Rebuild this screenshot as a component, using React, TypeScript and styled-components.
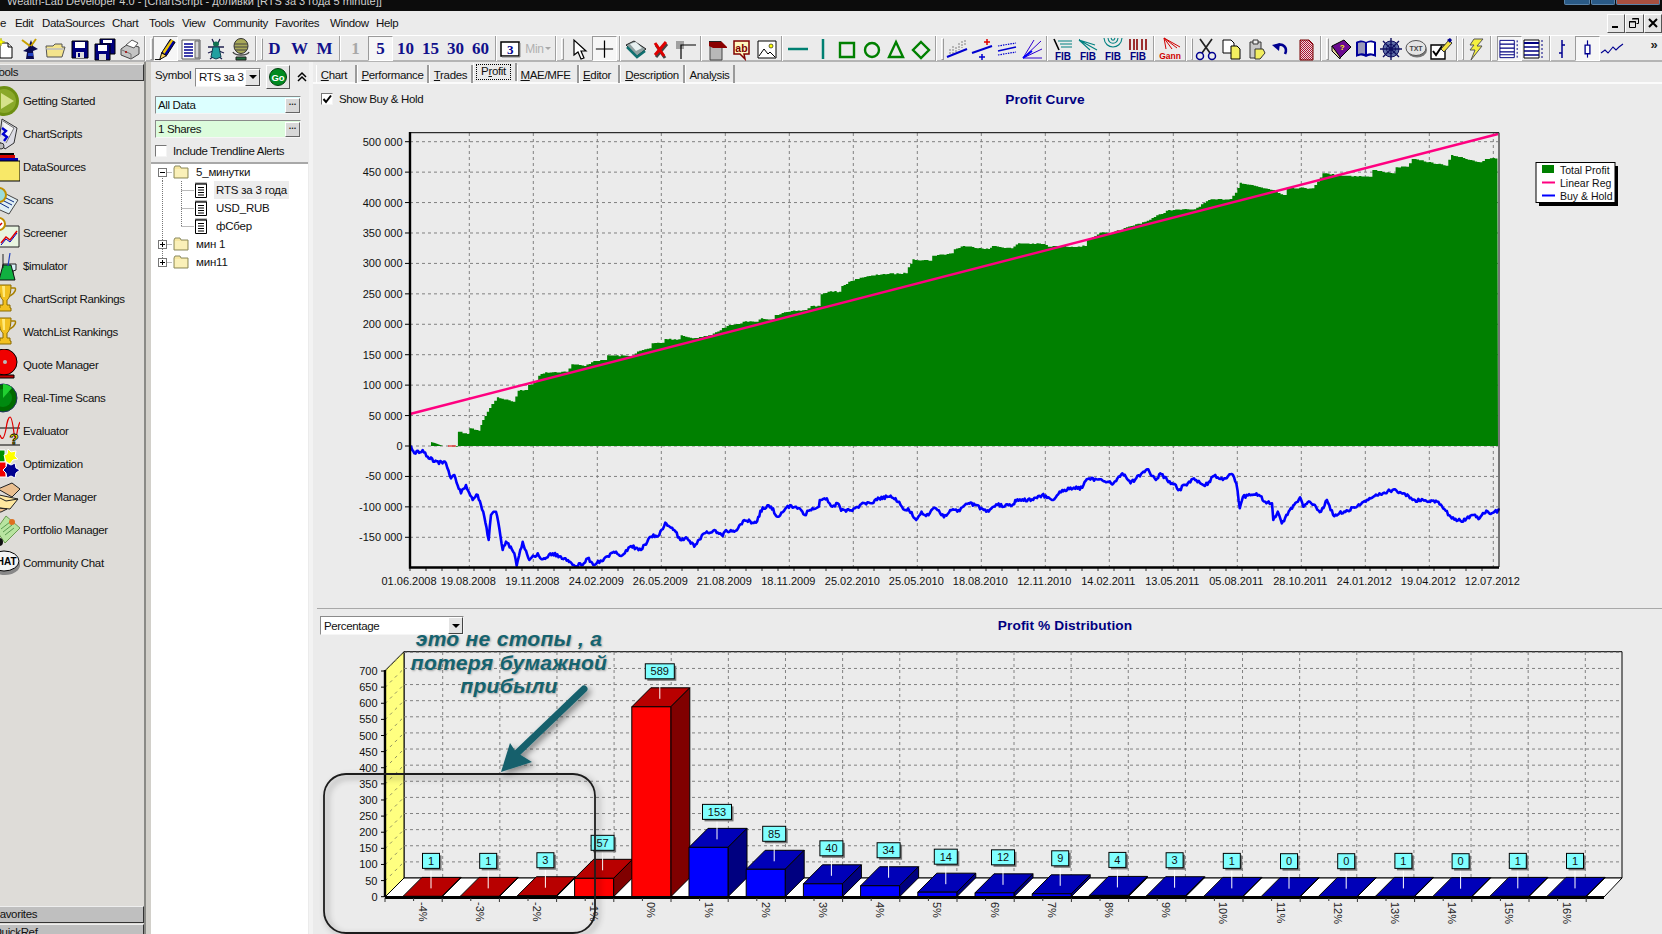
import React from 'react';
import styled, { createGlobalStyle } from 'styled-components';

const UI = `"Liberation Sans", Arial, sans-serif`;

const Global = createGlobalStyle`
  html, body { margin: 0; padding: 0; background: #ebebeb; }
  * { box-sizing: border-box; }
`;

const Page = styled.div`
  width: 1662px; height: 934px; overflow: hidden; display: flex; flex-direction: column;
  background: #ebebeb; font-family: ${UI}; font-size: 11.5px; letter-spacing: -0.35px; color: #111;
`;
const TitleBar = styled.div`
  height: 11px; flex: none; background: #0c0c0c; display: flex; overflow: hidden; padding-left: 7px;
`;
const TitleText = styled.div`
  font-size: 11px; letter-spacing: 0; color: #cfcfcf; line-height: 14px; margin-top: -6px; white-space: nowrap;
`;
const WinButtons = styled.div` margin-left: auto; display: flex; gap: 1px; height: 5px; margin-right: 2px; `;
const WinButton = styled.div<{ $w: number; $c: string }>`
  width: ${p => p.$w}px; height: 5px; background: ${p => p.$c}; border: 1px solid #5a83a8; border-top: 0; border-radius: 0 0 2px 2px;
`;
const MenuBar = styled.div`
  height: 24px; flex: none; display: flex; align-items: center; padding-left: 0; position: relative; background: #ebebeb;
`;
const MenuItem = styled.span<{ $w: number }>` width: ${p => p.$w}px; flex: none; white-space: nowrap; `;
const MdiButtons = styled.div` margin-left: auto; display: flex; `;
const MdiButton = styled.div`
  width: 18.5px; height: 19px; background: #e4e4e4; border: 1px solid; border-color: #fff #555 #555 #fff;
  display: flex; align-items: center; justify-content: center;
`;
const Toolbar = styled.div`
  height: 27px; flex: none; display: flex; align-items: center; margin-left: -8px; width: 1670px;
  background: #ebebeb; border-top: 1px solid #fff; border-bottom: 2px solid #b4b4b4; padding-top: 1px;
`;
const ToolBtn = styled.div<{ $w?: number; $on?: boolean }>`
  width: ${p => p.$w ?? 25}px; height: 25px; flex: none; display: flex; align-items: center; justify-content: center;
  ${p => p.$on ? 'background: #f6f6f6; border: 1px solid; border-color: #9a9a9a #fff #fff #9a9a9a;' : ''}
`;
const ToolLetter = styled.span<{ $gray?: boolean }>`
  font-family: "Liberation Serif", serif; font-weight: 700; font-size: 17px; letter-spacing: 0;
  color: ${p => p.$gray ? '#a8a8a8' : '#10108a'};
`;
const MinLabel = styled.span` color: #b0b0b0; font-size: 12px; display: flex; align-items: center; gap: 1px; `;
const Gap = styled.div<{ $w: number }>`
  width: ${p => p.$w}px; height: 25px; flex: none; display: flex; align-items: center; gap: 4px; padding-left: 2px;
`;
const SepLine = styled.div` width: 2px; height: 25px; border-left: 1px solid #a0a0a0; border-right: 1px solid #fff; `;
const Grip = styled.div` width: 3px; height: 22px; border: 1px solid; border-color: #fff #9a9a9a #9a9a9a #fff; `;
const Chevrons = styled.span` margin-left: 26px; font-weight: 700; font-size: 13px; line-height: 14px; color: #222; margin-top: -8px; flex: none; `;

const Body = styled.div` flex: 1; display: flex; min-height: 0; `;
const Sidebar = styled.div`
  width: 146px; flex: none; background: #dedcd8; border-right: 2px solid #8a8a86; display: flex; flex-direction: column;
  padding-top: 2px; overflow: hidden;
`;
const SideHead = styled.div<{ $last?: boolean }>`
  height: 17px; flex: none; background: #bfbfbf; border: 1px solid; border-color: #eee #333 #333 #eee;
  margin-bottom: ${p => p.$last ? -7 : 1}px; line-height: 15px; margin-left: -12px; padding-left: 4px; white-space: nowrap; overflow: hidden;
`;
const SideList = styled.div` flex: 1; padding-top: 2px; `;
const SideItem = styled.div`
  height: 33px; display: flex; align-items: center; white-space: nowrap; overflow: hidden;
`;
const SideIcon = styled.svg` width: 32px; height: 32px; margin-left: -12px; margin-right: 3px; flex: none; `;
const Splitter = styled.div` width: 5px; flex: none; background: #d2d0ca; `;
const Mid = styled.div` width: 162px; flex: none; display: flex; flex-direction: column; border-right: 4px solid #f3f3f3; `;
const SymbolRow = styled.div` height: 28px; flex: none; display: flex; align-items: center; padding: 0 0 0 4px; margin-top: 1px; `;
const SymbolLabel = styled.span` width: 40px; flex: none; margin-top: -5px; `;
const Combo = styled.div<{ $w: number }>`
  width: ${p => p.$w}px; height: 19px; background: #fff; border: 1px solid; border-color: #8a8a8a #f6f6f6 #f6f6f6 #8a8a8a;
  display: flex; align-items: center; padding-left: 3px; justify-content: space-between; flex: none; white-space: nowrap; overflow: hidden;
  font-size: 11.5px;
`;
const ComboArrow = styled.div`
  width: 15px; height: 17px; background: #e4e4e4; border: 1px solid; border-color: #fff #444 #444 #fff; flex: none;
  display: flex; align-items: center; justify-content: center;
  &::after { content: ''; border-left: 4px solid transparent; border-right: 4px solid transparent; border-top: 4px solid #000; }
`;
const GoButton = styled.div`
  width: 24px; height: 24px; margin-left: 5px; background: #e4e4e4; border: 1px solid; border-color: #fff #555 #555 #fff;
  display: flex; align-items: center; justify-content: center; flex: none;
`;
const FieldBox = styled.div<{ $bg: string; $top: number }>`
  width: 146px; height: 18px; margin: ${p => p.$top}px 0 0 4px; flex: none; background: ${p => p.$bg};
  border: 1px solid; border-color: #8a8a8a #f6f6f6 #f6f6f6 #8a8a8a; display: flex; align-items: center; justify-content: space-between; padding-left: 2px;
`;
const Ellipsis = styled.div`
  width: 15px; height: 15px; background: #d8d8d8; border: 1px solid; border-color: #fff #666 #666 #fff;
  text-align: center; font-weight: 700; line-height: 6px; font-size: 9px; letter-spacing: 0; color: #222;
`;
const CheckRow = styled.div` height: 13px; display: flex; align-items: center; gap: 6px; margin: 6px 0 0 4px; flex: none; `;
const Check = styled.div<{ $on?: boolean }>`
  width: 12px; height: 12px; background: #fff; border: 1px solid; border-color: #777 #f4f4f4 #f4f4f4 #777; flex: none;
  display: flex; align-items: center; justify-content: center;
`;
const Tree = styled.div`
  flex: 1; margin-top: 5px; background: #fff; border-top: 2px solid #a8a8a8; width: 157px; letter-spacing: -0.2px;
  & > :first-child { margin-top: -1px; }
`;
const TreeRow = styled.div` height: 18px; display: flex; align-items: center; white-space: nowrap; `;
const TreeName = styled.span<{ $sel?: boolean; $doc?: boolean }>`
  margin-left: ${p => p.$doc ? 7 : 5}px; padding: 0 2px; height: 18px; line-height: 18px;
  ${p => p.$sel ? 'background: #ececec;' : ''}
`;

const Main = styled.div` flex: 1; min-width: 0; display: flex; flex-direction: column; `;
const TabBar = styled.div`
  height: 22px; flex: none; display: flex; padding: 2px 0 0 3px; border-bottom: 2px solid #fbfbfb;
`;
const Tab = styled.div<{ $w: number; $on?: boolean; $shift?: number }>`
  width: ${p => p.$w}px; flex: none; height: 18px; text-align: center; line-height: 20px; margin-top: ${p => p.$on ? -1 : 1}px;
  padding-right: ${p => p.$shift ?? 0}px;
  border-right: 2px solid #9a9a9a; border-left: 1px solid #fff; white-space: nowrap; font-size: 11.5px;
  & > span { ${p => p.$on ? 'display: block; margin: 1px 0 0 2px; height: 16px; line-height: 15px; outline: 1px dotted #000; outline-offset: -1px;' : ''} }
`;
const UpperPanel = styled.div` height: 524px; flex: none; display: flex; flex-direction: column; `;
const PanelHead = styled.div` height: 30px; flex: none; display: flex; align-items: center; padding-left: 8px; `;
const ShowCheck = styled.div` width: 624px; flex: none; display: flex; align-items: center; gap: 6px; `;
const ChartTitle = styled.div`
  width: 200px; flex: none; text-align: center; color: #000080; font-weight: 700; font-size: 13.7px; letter-spacing: 0.1px;
`;
const ChartSvg = styled.svg` display: block; flex: none; `;
const Divider = styled.div` height: 1px; flex: none; background: #a8a8a8; margin-left: 4px; `;
const LowerPanel = styled.div` flex: 1; position: relative; display: flex; flex-direction: column; min-height: 0; `;
const LowerHead = styled.div` height: 31px; flex: none; display: flex; align-items: center; padding: 2px 0 0 7px; `;
const LowerTitle = styled(ChartTitle)` margin-left: 501px; `;
const Annotation = styled.div`
  position: absolute; left: 86px; top: 18px; width: 220px; text-align: center;
  font: italic 700 21px/23.5px ${UI}; letter-spacing: 0.3px; color: #15636f;
  text-shadow: 1px 1px 2px rgba(0,0,0,.3); white-space: nowrap;
`;

/* ---------- toolbar icons ---------- */
const Ico = styled.svg` width: 24px; height: 24px; display: block; `;
const Fib = ({ children, c = '#000080' }: { children: React.ReactNode; c?: string }) => (
  <Ico viewBox="0 0 24 24">{children}<text x="12" y="22.500" textAnchor="middle" fontFamily={UI} fontWeight={700} fontSize="10" fill={c} letterSpacing="0">FIB</text></Ico>
);
const icons: Record<string, React.ReactNode> = {
  newDoc: <Ico viewBox="0 0 24 24"><path d="M7 6h8l4 4v11H7z" fill="#fff" stroke="#000" /><path d="M15 6v4h4" fill="#ddd" stroke="#000" /><path d="M8 1l1 3 3 1-3 1-1 3-1-3-3-1 3-1z" fill="#ff0" stroke="#aa0" strokeWidth=".5" /></Ico>,
  wizard: <Ico viewBox="0 0 24 24"><path d="M13 3l-3 8-5 3 4 1-1 7h8l-1-8 5-2-5-3z" fill="#0a0a50" /><path d="M4 3l8 6M18 2l-5 7" stroke="#c8a000" strokeWidth="2" /><path d="M10 16h5v3h-5z" fill="#2040c0" /></Ico>,
  open: <Ico viewBox="0 0 24 24"><path d="M3 9h7l2-2h7v3h3l-3 10H4z" fill="#f4e48c" stroke="#555" /><path d="M3 11h18v2H4z" fill="#c9c6b5" /></Ico>,
  save: <Ico viewBox="0 0 24 24"><path d="M4 4h16v17H4z" fill="#00007c" stroke="#000" /><path d="M7 5h10v6H7z" fill="#fff" /><path d="M8 15h8v6H8z" fill="#ddd" /><path d="M10 16h2v4h-2z" fill="#00007c" /></Ico>,
  saveAll: <Ico viewBox="0 0 24 24"><path d="M7 2h15v15H7z" fill="#00007c" stroke="#000" /><path d="M2 7h15v16H2z" fill="#00007c" stroke="#000" /><path d="M5 8h9v6H5z" fill="#fff" /><path d="M6 17h7v6H6z" fill="#ddd" /><path d="M10 3h9v3h-9z" fill="#fff" /></Ico>,
  print: <Ico viewBox="0 0 24 24"><path d="M3 12l7-5 11 3v7l-8 5-10-4z" fill="#c4c4c4" stroke="#444" /><path d="M8 8l6-5 6 3-4 5z" fill="#fff" stroke="#555" /><path d="M4 13l9 4v5" fill="none" stroke="#777" /><circle cx="8" cy="15" r="1" fill="#a00" /></Ico>,
  pencil: <Ico viewBox="0 0 24 24"><path d="M8 16L17 2l5 3-9 14z" fill="#0000a0" stroke="#000" /><path d="M8 16l5 3-7 4z" fill="#f6d060" stroke="#000" /><path d="M9 15l9-13 2 1-9 14z" fill="#f2c800" /><path d="M1 23h6" stroke="#000" /></Ico>,
  list: <Ico viewBox="0 0 24 24"><path d="M3 3h18v19H3z" fill="#fff" stroke="#555" /><path d="M5 7h9M5 10h9M5 13h9M5 16h9M5 19h9" stroke="#000090" strokeWidth="1.3" /><path d="M16 4h4v17h-4z" fill="#d4d4d4" stroke="#666" /></Ico>,
  bug: <Ico viewBox="0 0 24 24"><path d="M8 2l2 4M16 2l-2 4M4 10h16M4 16l5-2M20 16l-5-2M6 22l4-3M18 22l-4-3" stroke="#202050" strokeWidth="1.3" /><ellipse cx="12" cy="7" rx="3" ry="2.5" fill="#107050" /><path d="M9 10h6l2 10-5 2-5-2z" fill="#20a0a0" stroke="#104050" /></Ico>,
  mic: <Ico viewBox="0 0 24 24"><ellipse cx="12" cy="9" rx="7" ry="7.5" fill="#a8a858" stroke="#333" /><path d="M5 7h14M5 10h14M6 13h12" stroke="#444" /><path d="M4 15c2 4 14 4 16 0" fill="none" stroke="#444" strokeWidth="1.5" /><path d="M7 20h10v3H7z" fill="#207040" stroke="#222" /></Ico>,
  d: <ToolLetter>D</ToolLetter>, w: <ToolLetter>W</ToolLetter>, m: <ToolLetter>M</ToolLetter>,
  n1: <ToolLetter $gray>1</ToolLetter>, n5: <ToolLetter>5</ToolLetter>, n10: <ToolLetter>10</ToolLetter>, n15: <ToolLetter>15</ToolLetter>, n30: <ToolLetter>30</ToolLetter>, n60: <ToolLetter>60</ToolLetter>,
  box3: <Ico viewBox="0 0 24 24"><path d="M2 5h18v14H2z" fill="#fff" stroke="#000" strokeWidth="1.5" /><path d="M21 6v14H3" fill="none" stroke="#888" /><text x="11" y="17" textAnchor="middle" fontFamily="Liberation Serif" fontWeight={700} fontSize="13" fill="#000090">3</text></Ico>,
  min: <MinLabel>Min<svg width="6" height="4"><path d="M0 0h6L3 3z" fill="#a8a8a8" /></svg></MinLabel>,
  cursor: <Ico viewBox="0 0 24 24"><path d="M7 3v15l4-3 3 7 3-1-3-7h5z" fill="#fff" stroke="#000" strokeWidth="1.2" /></Ico>,
  cross: <Ico viewBox="0 0 24 24"><path d="M12 3v18M3 12h18" stroke="#000" strokeWidth="1.3" /></Ico>,
  book: <Ico viewBox="0 0 24 24"><path d="M2 8l8-4 12 8-9 7z" fill="#90a0a0" stroke="#222" /><path d="M3 10l10 10 8-6" fill="none" stroke="#107070" strokeWidth="2.5" /><path d="M6 7l6-2 6 6-6 3z" fill="#e8f0f0" /></Ico>,
  redX: <Ico viewBox="0 0 24 24"><path d="M7 8l9 13M18 7L7 20" stroke="#444" strokeWidth="3" /><path d="M6 6l9 13M17 5L6 18" stroke="#e00000" strokeWidth="3" /></Ico>,
  corner: <Ico viewBox="0 0 24 24"><path d="M2 4h8v8H2z" fill="#a0a0a0" /><path d="M7 22V8h15" fill="none" stroke="#000" strokeWidth="1.2" /></Ico>,
  note: <Ico viewBox="0 0 24 24"><path d="M5 8h12v15H5z" fill="#b8b8b8" stroke="#444" /><path d="M4 4h12l6 6v1H8L4 9z" fill="#8a0000" /><path d="M4 4h12v1H4z" fill="#222" /></Ico>,
  ab: <Ico viewBox="0 0 24 24"><path d="M4 4h15v13h-5l1 5-5-5H4z" fill="#fff8c0" stroke="#800000" strokeWidth="1.5" /><text x="11.500" y="14.500" textAnchor="middle" fontFamily={UI} fontWeight={700} fontSize="10.500" fill="#800000" letterSpacing="0">ab</text></Ico>,
  picture: <Ico viewBox="0 0 24 24"><path d="M3 4h18v17H3z" fill="#fff" stroke="#000" /><circle cx="16" cy="9" r="2" fill="#ff0" stroke="#000" strokeWidth=".6" /><path d="M4 19l5-7 4 5 2-2 5 5" fill="none" stroke="#000" /></Ico>,
  hline: <Ico viewBox="0 0 24 24"><path d="M2 12h20" stroke="#008072" strokeWidth="2.5" /></Ico>,
  vline: <Ico viewBox="0 0 24 24"><path d="M12 2v20" stroke="#008072" strokeWidth="2.5" /></Ico>,
  square: <Ico viewBox="0 0 24 24"><path d="M5 6h14v14H5z" fill="none" stroke="#008000" strokeWidth="2.4" /></Ico>,
  circle: <Ico viewBox="0 0 24 24"><circle cx="12" cy="13" r="7" fill="none" stroke="#008000" strokeWidth="2.4" /></Ico>,
  triangle: <Ico viewBox="0 0 24 24"><path d="M12 5l7 15H5z" fill="none" stroke="#008000" strokeWidth="2.4" /></Ico>,
  diamond: <Ico viewBox="0 0 24 24"><path d="M12 5l8 8-8 8-8-8z" fill="none" stroke="#008000" strokeWidth="2.4" /></Ico>,
  trend: <Ico viewBox="0 0 24 24"><path d="M5 12v6M8 9v8M11 10v6M14 6v7M17 4v7M20 3v6" stroke="#a0a0a0" strokeWidth="1.4" strokeDasharray="2 1" /><path d="M2 20l20-8" stroke="#0000d0" strokeWidth="2" /></Ico>,
  crossTrend: <Ico viewBox="0 0 24 24"><path d="M2 16l20-7" stroke="#0000d0" strokeWidth="2" /><path d="M14 5h6M17 2v6" stroke="#e00000" strokeWidth="1.5" /><path d="M9 20h6M12 17v6" stroke="#0000d0" strokeWidth="1.5" /></Ico>,
  dotted: <Ico viewBox="0 0 24 24"><path d="M3 9l18-3M3 18l18-3" stroke="#0000d0" strokeWidth="1.2" strokeDasharray="1.5 1" /><path d="M3 14l18-4" stroke="#0000d0" strokeWidth="1.6" /></Ico>,
  fan: <Ico viewBox="0 0 24 24"><path d="M3 21L21 4M3 21L22 12M3 21h19M3 21L14 3" stroke="#3000d0" strokeWidth="1" fill="none" /><path d="M3 21l9-7" stroke="#0000ff" strokeWidth="1.8" /></Ico>,
  fib1: <Fib><path d="M3 2l5 11" stroke="#000" strokeWidth="1.6" /><path d="M7 4h14M9 7h12M10 10h11" stroke="#008080" strokeWidth="1.2" /></Fib>,
  fib2: <Fib><path d="M3 3l18 10M3 3l16 5M3 3l11 10" stroke="#008080" strokeWidth="1.1" fill="none" /></Fib>,
  fib3: <Fib><path d="M3 1c1 12 17 12 18 0M7 1c1 7 9 7 10 0M10 1c1 3 3 3 4 0" stroke="#008080" strokeWidth="1.1" fill="none" /></Fib>,
  fib4: <Fib><path d="M4 2v11M8 2v11M11 2v11M16 2v11M20 2v11" stroke="#8a0000" strokeWidth="1.6" /></Fib>,
  gann: <Ico viewBox="0 0 24 24"><path d="M6 1l16 9M6 1l13 10M6 1l8 11M6 1l2 11" stroke="#d00000" strokeWidth="1" fill="none" /><text x="12" y="22" textAnchor="middle" fontFamily={UI} fontWeight={700} fontSize="8.5" fill="#d00000" letterSpacing="0">Gann</text></Ico>,
  scissors: <Ico viewBox="0 0 24 24"><path d="M6 2l10 14M18 2L8 16" stroke="#222" strokeWidth="1.7" /><circle cx="6" cy="19" r="3.5" fill="none" stroke="#000090" strokeWidth="1.5" /><circle cx="18" cy="19" r="3.5" fill="none" stroke="#000090" strokeWidth="1.5" /></Ico>,
  copy: <Ico viewBox="0 0 24 24"><path d="M4 3h8l3 3v10H4z" fill="#fff" stroke="#000" /><path d="M12 9h6l3 3v10h-9z" fill="#f2ee60" stroke="#000" /></Ico>,
  paste: <Ico viewBox="0 0 24 24"><path d="M6 5h11v16H6z" fill="#c8c8c8" stroke="#333" /><path d="M9 3h5v4H9z" fill="#eee" stroke="#333" /><path d="M11 12h8l2 4-5 6h-5z" fill="#f2ee60" stroke="#333" /></Ico>,
  undo: <Ico viewBox="0 0 24 24"><path d="M7 9c7-4 12 2 9 8" fill="none" stroke="#000090" strokeWidth="2.6" /><path d="M3 8l8-2-1 8z" fill="#000090" /></Ico>,
  redPage: <Ico viewBox="0 0 24 24"><defs><pattern id="chk" width="2" height="2" patternUnits="userSpaceOnUse"><rect width="2" height="2" fill="#b01030" /><rect width="1" height="1" fill="#e8e0e0" /><rect x="1" y="1" width="1" height="1" fill="#e8e0e0" /></pattern></defs><path d="M6 3h9l4 4v16H6z" fill="url(#chk)" stroke="#700" /></Ico>,
  purpleBook: <Ico viewBox="0 0 24 24"><path d="M3 9L15 3l7 7-11 11z" fill="#6a0a90" stroke="#000" /><path d="M3 9v5l8 8v-2z" fill="#e8d8a0" stroke="#000" /><text x="13" y="13" fontFamily={UI} fontWeight={700} fontSize="8" fill="#ff0" textAnchor="middle">?</text></Ico>,
  blueBook: <Ico viewBox="0 0 24 24"><path d="M2 5c4-2 7-2 10 0 3-2 6-2 10 0v15c-4-2-7-2-10 0-3-2-6-2-10 0z" fill="#00009a" /><path d="M4 6c3-1 5-1 7 0v11c-2-1-4-1-7 0z" fill="#9a9ab8" /><path d="M13 6c2-1 5-1 7 0v11c-3-1-5-1-7 0z" fill="#fff" /></Ico>,
  web: <Ico viewBox="0 0 24 24"><circle cx="12" cy="12" r="8" fill="#6070a8" /><path d="M12 1v22M1 12h22M4 4l16 16M20 4L4 20" stroke="#101060" strokeWidth="1.4" /><circle cx="12" cy="12" r="4.5" fill="none" stroke="#101060" /><circle cx="12" cy="12" r="8" fill="none" stroke="#101060" /></Ico>,
  chat: <Ico viewBox="0 0 24 24"><ellipse cx="13" cy="13" rx="10" ry="7.5" fill="#777" /><ellipse cx="12" cy="11" rx="10" ry="7.5" fill="#e4e4e4" stroke="#555" /><text x="12" y="14" textAnchor="middle" fontFamily={UI} fontWeight={700} fontSize="7" fill="#444" letterSpacing="0">TXT</text></Ico>,
  checkPen: <Ico viewBox="0 0 24 24"><path d="M2 8h14v14H2z" fill="#fff" stroke="#000" strokeWidth="1.4" /><path d="M4 14l3 4 6-9" fill="none" stroke="#000" strokeWidth="2" /><path d="M12 12l8-9 3 3-8 9z" fill="#f2e040" stroke="#333" /><path d="M18 3l3-2 2 2-2 3z" fill="#000090" /></Ico>,
  bolt: <Ico viewBox="0 0 24 24"><path d="M11 2h9l-6 7h5L8 23l4-10H7l4-5H7z" fill="#f4f040" stroke="#555" /></Ico>,
  grid1: <Ico viewBox="0 0 24 24"><path d="M2 3h15v18H2z" fill="#fff" stroke="#000080" /><path d="M2 7h15M2 11h15M2 15h15M2 18h15" stroke="#000080" strokeWidth="1.3" /><path d="M20 3v18" stroke="#000080" strokeDasharray="2 2" /></Ico>,
  grid2: <Ico viewBox="0 0 24 24"><path d="M2 3h15v18H2z" fill="#fff" stroke="#000" /><path d="M2 6h15" stroke="#000080" strokeWidth="2" /><path d="M2 10h15M2 14h15M2 18h15" stroke="#000080" strokeWidth="1.3" /><path d="M20 3v18" stroke="#000080" strokeDasharray="2 2" /></Ico>,
  bars: <Ico viewBox="0 0 24 24"><path d="M12 3v18M9 16h3M12 8h3" stroke="#000090" strokeWidth="1.5" /></Ico>,
  candle: <Ico viewBox="0 0 24 24"><path d="M12 3v18" stroke="#000090" strokeWidth="1.2" /><path d="M9.500 8h5v9h-5z" fill="#fff" stroke="#000090" strokeWidth="1.4" /></Ico>,
  line: <Ico viewBox="0 0 24 24"><path d="M1 16l4-3 3 3 5-6 3 3 3-3 4-3" fill="none" stroke="#000090" strokeWidth="1.1" /></Ico>,
};

type TI = { k?: string; w?: number; on?: boolean; gap?: number; grip?: boolean };
const tools: TI[] = [
  { k: 'newDoc' }, { k: 'wizard' }, { k: 'open' }, { k: 'save' }, { k: 'saveAll' }, { k: 'print' }, { gap: 11, grip: true },
  { k: 'pencil', on: true }, { k: 'list' }, { k: 'bug' }, { k: 'mic' }, { gap: 9, grip: true },
  { k: 'd' }, { k: 'w' }, { k: 'm' }, { gap: 6 },
  { k: 'n1' }, { k: 'n5', on: true }, { k: 'n10' }, { k: 'n15' }, { k: 'n30' }, { k: 'n60' }, { gap: 5 },
  { k: 'box3' }, { k: 'min', w: 30 }, { gap: 13.5, grip: true },
  { k: 'cursor' }, { k: 'cross', on: true }, { gap: 6.5 },
  { k: 'book' }, { k: 'redX' }, { k: 'corner' }, { gap: 6 },
  { k: 'note' }, { k: 'ab' }, { k: 'picture' }, { gap: 6 },
  { k: 'hline' }, { k: 'vline' }, { k: 'square', w: 24.5 }, { k: 'circle', w: 24.5 }, { k: 'triangle', w: 24.5 }, { k: 'diamond', w: 24.5 }, { gap: 11, grip: true },
  { k: 'trend' }, { k: 'crossTrend' }, { k: 'dotted' }, { k: 'fan' }, { gap: 6.5 },
  { k: 'fib1' }, { k: 'fib2' }, { k: 'fib3' }, { k: 'fib4' }, { gap: 7 },
  { k: 'gann' }, { gap: 10.5, grip: true },
  { k: 'scissors' }, { k: 'copy' }, { k: 'paste' }, { k: 'undo' }, { k: 'redPage' }, { gap: 10.5, grip: true },
  { k: 'purpleBook' }, { k: 'blueBook' }, { k: 'web' }, { k: 'chat' }, { k: 'checkPen' }, { gap: 9, grip: true },
  { k: 'bolt' }, { gap: 9 }, { k: 'grid1', on: true }, { k: 'grid2' }, { gap: 3 }, { k: 'bars' }, { k: 'candle', on: true }, { k: 'line' },
];

/* ---------- sidebar icons ---------- */
const Trophy = () => (
  <g transform="translate(3 0)">
    <path d="M8 2h12c0 9-2 14-4 15v5h3v3h1v3H8v-3h1v-3h3v-5C10 16 8 11 8 2z" fill="#f2c020" stroke="#8a6a00" />
    <path d="M20 5h4c1 0 1 5-5 8" fill="none" stroke="#a88000" strokeWidth="1.5" />
    <path d="M8 5H4c-1 0-1 5 5 8" fill="none" stroke="#a88000" strokeWidth="1.5" />
    <path d="M11 3h3v11h-2z" fill="#ffe97a" />
  </g>
);
const sideItems: [string, React.ReactNode][] = [
  ['Getting Started', <><circle cx="16" cy="16" r="15" fill="#6d8f12" /><circle cx="16" cy="16" r="12" fill="#8aa92a" /><path d="M13 8l13 8-13 8z" fill="#d6e28a" /></>],
  ['ChartScripts', <><path d="M14 1l15 9-3 15-9 6-6-8z" fill="#dcdce4" stroke="#333" /><path d="M15 3l11 7-8 15" fill="#f6f6f6" stroke="#777" /><path d="M14 10l4 3-3 3 4 3-3 4" fill="none" stroke="#0000d0" strokeWidth="2.4" /><circle cx="13" cy="28" r="3" fill="#bbb" stroke="#333" /></>],
  ['DataSources', <><path d="M2 2h24v5H2z" fill="#000" /><path d="M5 4h22v4H5z" fill="#d00000" /><path d="M4 7h26v4H4z" fill="#0000b0" /><path d="M2 10h30v20H2z" fill="#f8e868" stroke="#000" /></>],
  ['Scans', <><path d="M10 6l20 10-9 14-18-8z" fill="#dfeef4" stroke="#444" /><path d="M14 12l12 6M12 15l12 6M10 18l11 6" stroke="#0a2a80" /><circle cx="11" cy="11" r="7" fill="#9adcdc" stroke="#c09000" strokeWidth="2" /><path d="M6 17l-2 8h3l2-7z" fill="#0000c0" /></>],
  ['Screener', <><path d="M11 9h20v21H11z" fill="#e8f4e0" stroke="#222" /><path d="M13 26l5-6 4 3 7-9" fill="none" stroke="#e00000" strokeWidth="1.5" /><path d="M13 28l5-6 4 3 7-9" fill="none" stroke="#0000c0" /><circle cx="11" cy="7" r="6" fill="#fff" stroke="#c09000" strokeWidth="2" /><path d="M8 6l3 3 3-3" stroke="#d00000" fill="none" strokeWidth="1.5" /></>],
  ['$imulator', <><path d="M15 14h13v6l-3 1v8H15z" fill="#d8f0f8" stroke="#222" /><path d="M15 15h8l4 15H11z" fill="#10b040" stroke="#111" /><path d="M15 4v14" stroke="#222" /><path d="M22 3l-2 13" stroke="#2040c0" strokeWidth="1.2" /></>],
  ['ChartScript Rankings', <Trophy />],
  ['WatchList Rankings', <Trophy />],
  ['Quote Manager', <><circle cx="16" cy="13" r="13" fill="#f00000" stroke="#000" /><circle cx="17" cy="13" r="2" fill="#bbb" /><path d="M6 26h20v3H2v-3z" fill="#c00000" stroke="#000" /></>],
  ['Real-Time Scans', <><circle cx="15" cy="16" r="14" fill="#006a00" stroke="#203060" /><circle cx="15" cy="16" r="9" fill="#008a10" /><path d="M15 16V2a14 14 0 0 1 9 4z" fill="#20d030" /></>],
  ['Evaluator', <><path d="M12 13H32M12 30H32" stroke="#000" /><path d="M12 20C14 26 16 24 18 14C19 6 21 2 22 2C24 2 25 10 26 18C27 25 28 23 29 18C30 12 31 9 32 7" fill="none" stroke="#e00000" strokeWidth="1.2" /><text x="26" y="29" fontFamily={UI} fontWeight={900} fontSize="15" fill="#ff0" stroke="#000" strokeWidth=".8" textAnchor="middle">?</text></>],
  ['Optimization', <><path d="M9 2h8v12H9z" fill="#009000" stroke="#fff" /><path d="M20 1l3 3 5-1-1 5 3 3-5 1-3 4-4-2-2-7 3-1z" fill="#ff0" stroke="#fff" /><path d="M9 14h9v4l3 3-3 3v5H9z" fill="#f00000" stroke="#fff" /><path d="M19 15l4 2 4-2 1 5 4 2-4 3-1 5-4-2-4 2-1-5-3-3 3-3z" fill="#000090" stroke="#fff" /></>],
  ['Order Manager', <><path d="M10 8l14-6 8 6-8 8z" fill="#eabf90" stroke="#222" /><path d="M2 12l28 6-8 10-20-2z" fill="#ffe8a0" stroke="#222" /><path d="M2 12l16 8 12-2" fill="none" stroke="#222" /><path d="M1 26l18 2-6 3H1z" fill="#eabf90" stroke="#222" /></>],
  ['Portfolio Manager', <><path d="M18 2l14 12-15 15L8 16z" fill="#b8e4a0" stroke="#6a9a50" /><path d="M13 15l9-7M15 18l9-7M17 21l9-7" stroke="#5a9a50" /><circle cx="24" cy="8" r="3" fill="#e07020" /><circle cx="11" cy="28" r="4" fill="#111" /></>],
  ['Community Chat', <><ellipse cx="17" cy="18" rx="15" ry="10" fill="#888" /><ellipse cx="16" cy="14" rx="15" ry="10" fill="#f4f4f4" stroke="#000" /><text x="15" y="18" textAnchor="middle" fontFamily={UI} fontWeight={700} fontSize="10" fill="#000" letterSpacing="0">CHAT</text></>],
];

const Folder = () => <svg width="16" height="14" viewBox="0 0 16 14"><path d="M1 3l1-2h5l1 2h7v10H1z" fill="#f6e6a0" stroke="#8a8a60" /><path d="M2 4h12v8H2z" fill="#faf0b8" /></svg>;
const DocIco = () => <svg width="12" height="16" viewBox="0 0 12 16"><path d="M.5 2h11v13.500H.5z" fill="#fff" stroke="#000" /><path d="M1 .5v2M3 .5v2M5 .5v2M7 .5v2M9 .5v2M11 .5v2" stroke="#000" /><path d="M3 5.500h6M3 8h6M3 10.500h6M3 13h6" stroke="#000" /></svg>;
const ExpandGutter = ({ open, tail, head }: { open: boolean; tail: boolean; head: boolean }) => (
  <svg width="22" height="18" viewBox="0 0 22 18" style={{ flex: 'none' }}>
    <path d={`M11.500 ${head ? 0 : 9}V${tail ? 18 : 9}M11.500 9.500H21`} stroke="#777" strokeDasharray="1 1" />
    <rect x="7.500" y="5.500" width="8" height="8" fill="#fff" stroke="#777" />
    <path d={open ? 'M9 9.500h5' : 'M9 9.500h5M11.500 7v5'} stroke="#000" />
  </svg>
);
const DocGutter = ({ last }: { last: boolean }) => (
  <svg width="44" height="18" viewBox="0 0 44 18" style={{ flex: 'none' }}>
    <path d={`M11.500 0V18M30.500 0V${last ? 9 : 18}M30.500 9.500H43`} stroke="#777" strokeDasharray="1 1" />
  </svg>
);
const treeRows = [
  { n: '5_минутки', folder: true, open: true, head: false, tail: true },
  { n: 'RTS за 3 года', sel: true },
  { n: 'USD_RUB' },
  { n: 'фСбер', last: true },
  { n: 'мин 1', folder: true, open: false, head: true, tail: true },
  { n: 'мин11', folder: true, open: false, head: true, tail: false },
];

/* ---------- profit curve ---------- */
function rng(seed: number) {
  let s = seed;
  return () => { s = (s * 16807) % 2147483647; return s / 2147483647; };
}
const z9: [number, number][] = [[10,710],[15,665],[35,672],[40,655],[60,662],[68,630],[78,605],[88,582],[100,562],[135,575],[145,542],[165,540],[168,525],[185,515],[190,497],[205,487],[250,485],[262,463],[290,468],[310,453],[335,450],[340,436],[390,438],[410,422],[432,415],[437,400],[460,398],[465,387],[495,388],[500,376],[525,385],[565,375],[600,348],[625,342],[635,335],[665,335],[675,325],[700,328],[705,315],[735,305],[770,300],[783,288],[803,288],[805,253],[820,245],[845,245],[850,228],[870,213],[890,203],[940,192],[990,190],[995,172],[1005,148],[1045,152],[1048,137],[1090,130],[1095,118],[1115,108],[1170,117],[1178,108],[1220,115],[1235,100],[1290,102],[1300,110],[1325,108],[1350,110],[1380,108],[1385,90],[1412,68],[1435,70],[1480,48],[1510,35],[1555,25],[1568,10]];
const z3: [number, number][] = [[188,630],[260,628],[300,600],[360,597],[375,578],[388,548],[480,570],[510,585],[520,563],[590,565],[620,520],[680,527],[750,530],[760,510],[815,520],[825,502],[855,500],[870,477],[965,497],[980,465],[1060,487],[1075,477],[1110,475]];
const z7b: [number, number][] = [[267,140],[280,160],[305,150],[320,170],[340,185],[375,190],[390,235],[400,225],[420,280],[435,255],[455,300],[470,285],[490,350],[503,420],[510,345],[525,335],[535,385],[545,450],[555,425],[580,460],[587,497],[605,425],[625,480],[650,460],[665,478],[695,460],[730,475],[755,495],[785,495],[800,475],[820,495],[850,475],[885,455],[900,468],[930,438],[960,450],[990,410],[1015,405],[1033,368],[1060,390],[1078,420],[1095,412],[1120,440],[1150,400],[1180,390],[1205,408],[1215,390],[1240,395],[1270,360],[1305,368],[1325,322],[1350,320],[1370,350],[1400,318]];
const z10b: [number, number][] = [[0,210],[8,225],[20,210],[40,200],[42,180],[58,175],[70,200],[82,190],[90,212],[115,213],[135,192],[160,190],[175,175],[198,170],[220,185],[232,210],[240,205],[258,240],[270,215],[280,228],[300,203],[320,232],[340,208],[350,215],[375,190],[390,195],[415,215],[440,195],[470,198],[485,178],[520,180],[540,165],[565,180],[585,150],[630,143],[640,118],[670,118],[700,130],[720,100],[738,130],[775,88],[795,120],[805,100],[820,120],[848,148],[880,115],[905,138],[925,108],[945,120],[965,102],[975,130],[983,205],[990,170],[1020,160],[1040,185],[1055,190],[1058,240],[1068,215],[1077,250],[1095,210],[1118,172],[1125,200],[1140,185],[1165,215],[1178,180],[1192,225],[1225,212],[1265,185],[1285,168],[1325,150],[1350,160],[1375,180],[1425,185],[1455,230],[1480,245],[1505,225],[1520,235],[1535,212],[1545,222],[1565,210]];

const profitTop: [number, number][] = [
  ...z9.map(([X, Y]): [number, number] => [450 + X / 2.178, 210 + Y / 3]).filter(p => p[0] < 1155),
  ...z3.map(([X, Y]): [number, number] => [1100 + X / 2.8, Y / 3]),
];
const blueKeys: [number, number][] = [
  ...z7b.map(([X, Y]): [number, number] => [320 + X / 3, 400 + Y / 3]),
  ...z10b.map(([X, Y]): [number, number] => [800 + X / 2.24, 440 + Y / 3]),
];
function walk(keys: [number, number][], step: number, amp: number, seed: number, stair: boolean) {
  const r = rng(seed);
  const out: string[] = [];
  for (let i = 0; i < keys.length - 1; i++) {
    const [x0, y0] = keys[i];
    const [x1, y1] = keys[i + 1];
    const n = Math.max(1, Math.round((x1 - x0) / step));
    for (let j = 0; j < n; j++) {
      const t = j / n;
      const x = x0 + (x1 - x0) * t;
      const y = y0 + (y1 - y0) * t + (j === 0 ? 0 : (r() - 0.5) * amp);
      out.push(`${x.toFixed(1)},${y.toFixed(1)}`);
      if (stair) out.push(`${(x + (x1 - x0) / n).toFixed(1)},${y.toFixed(1)}`);
    }
  }
  const last = keys[keys.length - 1];
  out.push(`${last[0].toFixed(1)},${last[1].toFixed(1)}`);
  return out.join(' ');
}
const profitPts = `455,446 ${walk(profitTop, 2.4, 1.2, 7, true)} 1497,446`;
const bluePts = walk(blueKeys, 1.2, 3.4, 19, false);

const gridXs = Array.from({ length: 17 }, (_, i) => 468.3 + i * 64);
const dates = ['19.08.2008','19.11.2008','24.02.2009','26.05.2009','21.08.2009','18.11.2009','25.02.2010','25.05.2010','18.08.2010','12.11.2010','14.02.2011','13.05.2011','05.08.2011','28.10.2011','24.01.2012','19.04.2012','12.07.2012'];
const yTicks = ['500 000','450 000','400 000','350 000','300 000','250 000','200 000','150 000','100 000','50 000','0','-50 000','-100 000','-150 000'];
const yOf = (i: number) => 141.7 + i * 30.43;

const ProfitCurve = () => (
  <ChartSvg width={1350} height={494} viewBox="312 114 1350 494" fontFamily={UI} fontSize="11" letterSpacing="0">
    {yTicks.map((t, i) => (
      <g key={t}>
        <path d={`M409 ${yOf(i)}H1497`} stroke="#808080" strokeDasharray="3 3" />
        <path d={`M404 ${yOf(i)}H409`} stroke="#000" />
        <text x={401.500} y={yOf(i) + 4} textAnchor="end" fill="#111">{t}</text>
      </g>
    ))}
    {gridXs.map(x => <path key={x} d={`M${x} 133V567`} stroke="#808080" strokeDasharray="3 3" />)}
    {Array.from({ length: 68 }, (_, i) => <path key={i} d={`M${409 + i * 16} 568v3`} stroke="#333" />)}
    <polygon points={profitPts} fill="#008000" />
    <polygon points="430,446 430,442 434,443 442,446" fill="#008000" />
    <path d="M447 446h8" stroke="#f00000" />
    <polyline points={bluePts} fill="none" stroke="#0000ff" strokeWidth="2.6" strokeLinejoin="round" />
    <path d="M409 414L1497 134" stroke="#ff0080" strokeWidth="2.4" />
    <path d="M409 132.700H1498V567" fill="none" stroke="#000" />
    <path d="M409 132V567.500H1498" fill="none" stroke="#000" strokeWidth="2.4" />
    <text x={408} y={585} textAnchor="middle" fill="#111">01.06.2008</text>
    {dates.map((d, i) => <text key={d} x={gridXs[i] - 1} y={585} textAnchor="middle" fill="#111">{d}</text>)}
    <rect x={1538} y={166} width={79} height={40} fill="#000" />
    <rect x={1535} y={162.500} width={79} height={40} fill="#fff" stroke="#000" />
    <rect x={1541} y={165} width={12} height={8} fill="#008000" />
    <path d="M1541 182.500h13" stroke="#ff0080" strokeWidth="2" />
    <path d="M1541 195.500h13" stroke="#0000ff" strokeWidth="2" />
    <text x={1559} y={173.500} fill="#111" fontSize="10.500">Total Profit</text>
    <text x={1559} y={186.500} fill="#111" fontSize="10.500">Linear Reg</text>
    <text x={1559} y={199.500} fill="#111" fontSize="10.500">Buy &amp; Hold</text>
  </ChartSvg>
);

/* ---------- distribution ---------- */
const vals = [1, 1, 3, 57, 589, 153, 85, 40, 34, 14, 12, 9, 4, 3, 1, 0, 0, 1, 0, 1, 1];
const cats = vals.map((_, i) => `${i - 4}%`);
const base = 896.7;
const k = 0.3224;
const fx = (i: number) => 402 + i * 57.2;
const Distribution = () => (
  <ChartSvg width={1350} height={294} viewBox="312 640 1350 294" fontFamily={UI} fontSize="11" letterSpacing="0">
    <defs>
      <filter id="sh" x="-20%" y="-20%" width="140%" height="140%"><feDropShadow dx="3" dy="3" stdDeviation="3" floodColor="#000" floodOpacity=".45" /></filter>
    </defs>
    <path d="M403 651.700V878H1621V651.700z" fill="none" stroke="#000" strokeWidth="1" />
    <path d="M384 670.700L403 651.700V878L384 897z" fill="#ffff80" stroke="#000" />
    {Array.from({ length: 14 }, (_, i) => {
      const y = 878 - (i + 1) * 16.12;
      return (
        <g key={i}>
          <path d={`M403 ${y}H1621`} stroke="#808080" strokeDasharray="3 3" />
          <path d={`M384 ${y + 19}L403 ${y}`} stroke="#909060" strokeDasharray="3 4" />
        </g>
      );
    })}
    {Array.from({ length: 21 }, (_, i) => <path key={i} d={`M${441.7 + i * 57.13} 652V878`} stroke="#808080" strokeDasharray="3 3" />)}
    {Array.from({ length: 15 }, (_, i) => {
      const y = base - i * 16.12;
      return (
        <g key={i}>
          <path d={`M380 ${y}H384`} stroke="#000" />
          <text x={376.500} y={y + 4} textAnchor="end" fill="#111">{i * 50}</text>
        </g>
      );
    })}
    <path d="M384 897L403 878H1621L1603 897z" fill="#fff" stroke="#000" />
    {vals.map((v, i) => {
      const x = fx(i);
      const top = base - v * k;
      const red = i < 5;
      return (
        <g key={i} stroke="#000">
          <path d={`M${x} ${top}l19 -19h39l-19 19z`} fill={red ? '#b80000' : '#0000b8'} />
          <path d={`M${x + 39} ${top}l19 -19V${base - 19}l-19 19z`} fill={red ? '#800000' : '#000080'} />
          <path d={`M${x} ${top}h39V${base}H${x}z`} fill={red ? '#ff0000' : '#0000ff'} />
        </g>
      );
    })}
    <path d="M384 670V897" stroke="#000" strokeWidth="2.4" />
    <path d="M384 897.500H1603" stroke="#000" strokeWidth="3" />
    {Array.from({ length: 43 }, (_, i) => <path key={i} d={`M${384 + i * 28.6} 898v${i % 2 ? 3 : 4}`} stroke="#333" />)}
    {vals.map((v, i) => {
      const x = fx(i);
      const top = base - v * k;
      const cx = x + 28;
      const w = v >= 100 ? 29 : v >= 10 ? 23 : 17;
      const by = top - 28;
      return (
        <g key={i}>
          <path d={`M${cx} ${by}V${top - 8}`} stroke="#fff" />
          <rect x={cx - w / 2 + 2} y={by - 13} width={w} height={15} fill="#777" />
          <rect x={cx - w / 2} y={by - 15} width={w} height={15} fill="#80ffff" stroke="#000" />
          <text x={cx} y={by - 3.500} textAnchor="middle" fill="#111">{v}</text>
          <text x={x + 18.500} y={902} fill="#222" transform={`rotate(90 ${x + 18.500} 902)`} dominantBaseline="middle">{cats[i]}</text>
        </g>
      );
    })}
    <rect x={323} y={774} width={271} height={159} rx={22} fill="none" stroke="#1c1c1c" strokeWidth="1.800" filter="url(#sh)" />
    <g filter="url(#sh)">
      <path d="M583 689L512 757" stroke="#15606c" strokeWidth="7" strokeLinecap="round" />
      <path d="M500 772L509 743L515 752L531 762z" fill="#15606c" />
    </g>
  </ChartSvg>
);

const checkMark = <svg width="10" height="10" viewBox="0 0 10 10"><path d="M1.500 5l2.500 3 5-6.500" fill="none" stroke="#000" strokeWidth="2" /></svg>;

const menus: [string, number][] = [['e', 15], ['Edit', 27], ['DataSources', 70], ['Chart', 37], ['Tools', 33], ['View', 31], ['Community', 62], ['Favorites', 55], ['Window', 46], ['Help', 40]];
const tabs: { w: number; a: string; u: string; b: string; on?: boolean; shift?: number }[] = [
  { w: 41, a: '', u: 'C', b: 'hart', shift: 4 }, { w: 72, a: '', u: 'P', b: 'erformance' }, { w: 44, a: '', u: 'T', b: 'rades' },
  { w: 44, a: 'P', u: 'r', b: 'ofit', on: true, shift: 4 }, { w: 62, a: '', u: 'M', b: 'AE/MFE', shift: 4 }, { w: 41, a: '', u: 'E', b: 'ditor', shift: 4 },
  { w: 65, a: '', u: 'D', b: 'escription' }, { w: 50, a: 'Anal', u: 'y', b: 'sis' },
];

export default function App() {
  return (
    <Page>
      <Global />
      <TitleBar>
        <TitleText>Wealth-Lab Developer 4.0 - [ChartScript - доливки [RTS за 3 года 5 minute]]</TitleText>
        <WinButtons>
          <WinButton $w={26} $c="#2a5a86" /><WinButton $w={24} $c="#2a5a86" /><WinButton $w={44} $c="#a85040" />
        </WinButtons>
      </TitleBar>
      <MenuBar>
        {menus.map(([m, w]) => <MenuItem key={m} $w={w}>{m}</MenuItem>)}
        <MdiButtons>
          <MdiButton><svg width="11" height="11"><path d="M2 9h6" stroke="#000" strokeWidth="2" /></svg></MdiButton>
          <MdiButton><svg width="12" height="12"><path d="M4.500 1.500h6v5h-2M1.500 4.500h6v6h-6z" fill="none" stroke="#000" /><path d="M4 2h7M1 5h7" stroke="#000" /></svg></MdiButton>
          <MdiButton><svg width="12" height="12"><path d="M2 2l8 8M10 2l-8 8" stroke="#000" strokeWidth="2" /></svg></MdiButton>
        </MdiButtons>
      </MenuBar>
      <Toolbar>
        {tools.map((t, i) => t.gap !== undefined ? (
          <Gap key={i} $w={t.gap}><SepLine />{t.grip && <Grip />}</Gap>
        ) : (
          <ToolBtn key={i} $w={t.w} $on={t.on}>{icons[t.k as string]}</ToolBtn>
        ))}
        <Chevrons>»</Chevrons>
      </Toolbar>
      <Body>
        <Sidebar>
          <SideHead>Tools</SideHead>
          <SideList>
            {sideItems.map(([label, ic]) => (
              <SideItem key={label}>
                <SideIcon viewBox="0 0 32 32">{ic}</SideIcon>
                <span>{label}</span>
              </SideItem>
            ))}
          </SideList>
          <SideHead>Favorites</SideHead>
          <SideHead $last>QuickRef</SideHead>
        </Sidebar>
        <Splitter />
        <Mid>
          <SymbolRow>
            <SymbolLabel>Symbol</SymbolLabel>
            <Combo $w={66}>RTS за 3<ComboArrow /></Combo>
            <GoButton>
              <svg width="18" height="18" viewBox="0 0 18 18"><circle cx="9" cy="9" r="8.500" fill="#008a20" stroke="#004010" /><text x="9" y="12.500" textAnchor="middle" fontFamily={UI} fontWeight={700} fontSize="9.500" fill="#fff" letterSpacing="0">Go</text></svg>
            </GoButton>
            <svg width="10" height="12" viewBox="0 0 10 12" style={{ marginLeft: 7 }}><path d="M1 6l4-4 4 4M1 10l4-4 4 4" fill="none" stroke="#000" strokeWidth="1.500" /></svg>
          </SymbolRow>
          <FieldBox $bg="#dcffff" $top={5}>All Data<Ellipsis>...</Ellipsis></FieldBox>
          <FieldBox $bg="#dcfcdc" $top={6}>1 Shares<Ellipsis>...</Ellipsis></FieldBox>
          <CheckRow><Check />Include Trendline Alerts</CheckRow>
          <Tree>
            {treeRows.map(r => (
              <TreeRow key={r.n}>
                {r.folder ? (
                  <>
                    <ExpandGutter open={!!r.open} head={!!r.head} tail={!!r.tail} />
                    <Folder />
                    <TreeName>{r.n}</TreeName>
                  </>
                ) : (
                  <>
                    <DocGutter last={!!r.last} />
                    <DocIco />
                    <TreeName $doc $sel={r.sel}>{r.n}</TreeName>
                  </>
                )}
              </TreeRow>
            ))}
          </Tree>
        </Mid>
        <Main>
          <TabBar>
            {tabs.map(t => (
              <Tab key={t.b} $w={t.w} $on={t.on} $shift={t.shift}><span>{t.a}<u>{t.u}</u>{t.b}</span></Tab>
            ))}
          </TabBar>
          <UpperPanel>
            <PanelHead>
              <ShowCheck><Check $on>{checkMark}</Check>Show Buy &amp; Hold</ShowCheck>
              <ChartTitle>Profit Curve</ChartTitle>
            </PanelHead>
            <ProfitCurve />
          </UpperPanel>
          <Divider />
          <LowerPanel>
            <LowerHead>
              <Combo $w={144}>Percentage<ComboArrow /></Combo>
              <LowerTitle>Profit % Distribution</LowerTitle>
            </LowerHead>
            <Distribution />
            <Annotation>это не стопы , а<br />потеря бумажной<br />прибыли</Annotation>
          </LowerPanel>
        </Main>
      </Body>
    </Page>
  );
}
